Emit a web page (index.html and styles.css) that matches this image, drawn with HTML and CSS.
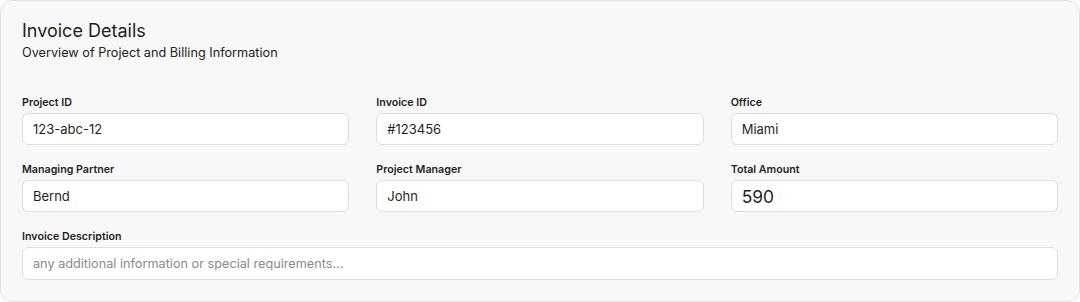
FILE: index.html
```html
<!DOCTYPE html>
<html lang="en">
<head>
    <meta charset="UTF-8">
    <meta name="viewport" content="width=device-width, initial-scale=1.0">
    <title>Invoice Details</title>
    <link rel="stylesheet" href="styles.css">
</head>
<body>
    <div class="card">
        <h1 class="title">Invoice Details</h1>
        <p class="subtitle">Overview of Project and Billing Information</p>

        <div class="grid">
            <div class="field">
                <label for="projectId">Project ID</label>
                <input type="text" id="projectId" value="123-abc-12">
            </div>
            <div class="field">
                <label for="invoiceId">Invoice ID</label>
                <input type="text" id="invoiceId" value="#123456">
            </div>
            <div class="field">
                <label for="office">Office</label>
                <input type="text" id="office" value="Miami">
            </div>
            <div class="field">
                <label for="partner">Managing Partner</label>
                <input type="text" id="partner" value="Bernd">
            </div>
            <div class="field">
                <label for="manager">Project Manager</label>
                <input type="text" id="manager" value="John">
            </div>
            <div class="field">
                <label for="total">Total Amount</label>
                <input type="number" id="total" class="amount" value="590">
            </div>
            <div class="field wide">
                <label for="description">Invoice Description</label>
                <input type="text" id="description" class="description" placeholder="any additional information or special requirements...">
            </div>
        </div>
    </div>
</body>
</html>
```

FILE: styles.css
```css
body {
    margin: 0;
    font-family: Inter, "Noto Sans", sans-serif;
    background-color: #ffffff;
    color: #1f1f1f;
}
.card {
    box-sizing: border-box;
    width: 1080px;
    height: 302px;
    padding: 18px 21px 21px 21px;
    background-color: #f8f8f8;
    border: 1px solid #e2e2e2;
    border-radius: 12px;
}
.title {
    margin: 0;
    font-size: 18px;
    font-weight: 400;
    line-height: 24px;
    color: #1e1e1e;
}
.subtitle {
    margin: 1px 0 0 0;
    font-size: 12.7px;
    line-height: 18px;
    color: #222;
}
.grid {
    display: grid;
    grid-template-columns: repeat(3, 1fr);
    column-gap: 27px;
    row-gap: 18px;
    margin-top: 34px;
}
.field {
    display: flex;
    flex-direction: column;
    gap: 3px;
}
.wide {
    grid-column: 1 / -1;
}
label {
    font-size: 10.7px;
    font-weight: 600;
    line-height: 14px;
    color: #1f1f1f;
}
input {
    box-sizing: border-box;
    width: 100%;
    height: 32px;
    padding: 0 10px;
    font-family: inherit;
    font-size: 13px;
    color: #1f1f1f;
    background-color: #ffffff;
    border: 1px solid #dedede;
    border-radius: 6px;
    outline: none;
}
input::placeholder {
    color: #8a8a8a;
}
.description {
    height: 33px;
    font-size: 12.7px;
}
.amount {
    font-size: 17.4px;
    -moz-appearance: textfield;
}
.amount::-webkit-inner-spin-button,
.amount::-webkit-outer-spin-button {
    -webkit-appearance: none;
    margin: 0;
}
```
